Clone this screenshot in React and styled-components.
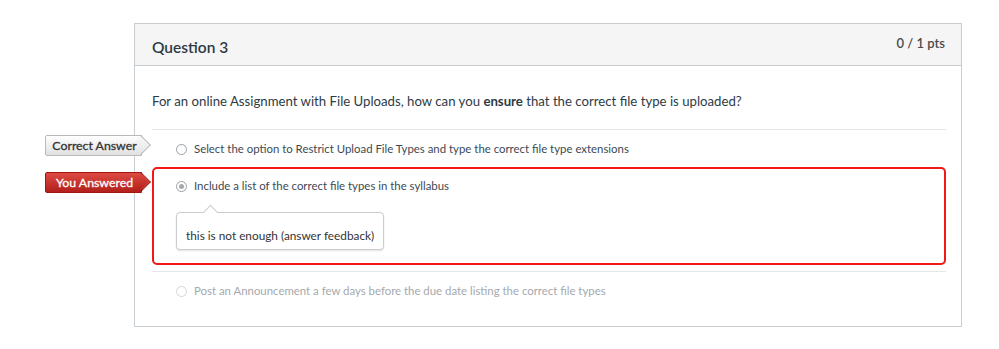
import React from 'react'
import styled, { createGlobalStyle, css } from 'styled-components'

const GlobalStyle = createGlobalStyle`
  body {
    margin: 0;
    background: #fff;
    font-family: Lato, "Open Sans", sans-serif;
    color: #2d3b45;
  }
`

const Page = styled.div`
  padding: 23px 0 0 134px;
`

const Card = styled.div`
  width: 826px;
  border: 1px solid #c7cdd1;
  background: #fff;
`

const Header = styled.div`
  display: flex;
  justify-content: space-between;
  align-items: flex-start;
  height: 41px;
  padding: 0 16px 0 17px;
  background: #f5f5f5;
  border-bottom: 1px solid #c7cdd1;
`

const Title = styled.h2`
  margin: 13px 0 0;
  font-size: 15.5px;
  line-height: 20px;
  font-weight: 600;
  color: #2d3b45;
`

const Points = styled.div`
  margin-top: 10px;
  font-size: 13px;
  line-height: 18px;
  font-weight: 600;
  color: #4a4a4a;
`

const Body = styled.div`
  padding: 0 15px 17px 17px;
`

const QuestionText = styled.p`
  margin: 0;
  padding: 25px 0 18px;
  font-size: 13.2px;
  line-height: 20px;
  color: #2d3b45;
`

const AnswerItem = styled.div`
  position: relative;
  ${p => p.$divider && css`
    border-top: 1px solid #e4e6e8;
  `}
  ${p => p.$gap && css`
    margin-top: 6px;
  `}
`

const AnswerBody = styled.div`
  padding: 10px 0 9px 24px;
  ${p => p.$wrong && css`
    padding: 8px 0 13px 22px;
    border: 2px solid #f01818;
    border-radius: 5px;
  `}
`

const AnswerLine = styled.div`
  display: flex;
  align-items: center;
  font-size: 11.4px;
  line-height: 18px;
  color: ${p => (p.$muted ? '#a5a9ad' : '#3d4a53')};
`

const Radio = styled.span`
  box-sizing: border-box;
  width: 11px;
  height: 11px;
  margin-right: 7px;
  border-radius: 50%;
  border: 1px solid ${p => (p.$muted ? '#d3d6d9' : '#9aa0a5')};
  background: #fff;
  display: flex;
  align-items: center;
  justify-content: center;
  flex-shrink: 0;
  &::after {
    content: '';
    display: ${p => (p.$checked ? 'block' : 'none')};
    width: 5px;
    height: 5px;
    border-radius: 50%;
    background: #a4a9ad;
  }
`

const Label = styled.div`
  position: absolute;
  z-index: 1;
  top: 5px;
  right: calc(100% + 10px);
  box-sizing: border-box;
  width: 97px;
  height: 21px;
  padding-left: 2px;
  border-radius: 2px 0 0 2px;
  font-size: 12.3px;
  line-height: 19px;
  font-weight: 400;
  -webkit-text-stroke: 0.3px currentColor;
  text-align: center;
  white-space: nowrap;
  ${p => (p.$tone === 'red'
    ? css`
      color: #fff;
      background: linear-gradient(#dc4a42, #b31f1a);
      border: 1px solid #a3150f;
      &::after {
        background: linear-gradient(135deg, #dc4a42, #b31f1a);
        border-color: #a3150f;
      }
    `
    : css`
      color: #333;
      background: linear-gradient(#ffffff, #e1e1e1);
      border: 1px solid #b9b9b9;
      &::after {
        background: linear-gradient(135deg, #fafafa, #e4e4e4);
        border-color: #b9b9b9;
      }
    `)}
  &::after {
    content: '';
    position: absolute;
    z-index: -1;
    top: 2px;
    right: -7px;
    width: 13px;
    height: 13px;
    border-style: solid;
    border-width: 1px 1px 0 0;
    transform: rotate(45deg);
  }
`

const Feedback = styled.div`
  position: relative;
  display: inline-block;
  margin-top: 17px;
  padding: 14px 9px 4px;
  border: 1px solid #c9cdd1;
  border-radius: 4px;
  box-shadow: 0 1px 2px rgba(0, 0, 0, 0.12);
  background: #fff;
  font-size: 11.8px;
  line-height: 18px;
  color: #333;
  &::before {
    content: '';
    position: absolute;
    top: -6px;
    left: 28px;
    width: 10px;
    height: 10px;
    background: #fff;
    border-top: 1px solid #c9cdd1;
    border-left: 1px solid #c9cdd1;
    transform: rotate(45deg);
  }
`

const App = () => (
  <Page>
    <GlobalStyle />
    <Card>
      <Header>
        <Title>Question 3</Title>
        <Points>0 / 1 pts</Points>
      </Header>
      <Body>
        <QuestionText>
          For an online Assignment with File Uploads, how can you <b>ensure</b> that the correct file type is uploaded?
        </QuestionText>
        <AnswerItem $divider>
          <Label>Correct Answer</Label>
          <AnswerBody>
            <AnswerLine>
              <Radio />
              Select the option to Restrict Upload File Types and type the correct file type extensions
            </AnswerLine>
          </AnswerBody>
        </AnswerItem>
        <AnswerItem>
          <Label $tone="red">You Answered</Label>
          <AnswerBody $wrong>
            <AnswerLine>
              <Radio $checked />
              Include a list of the correct file types in the syllabus
            </AnswerLine>
            <Feedback>this is not enough (answer feedback)</Feedback>
          </AnswerBody>
        </AnswerItem>
        <AnswerItem $divider $gap>
          <AnswerBody>
            <AnswerLine $muted>
              <Radio $muted />
              Post an Announcement a few days before the due date listing the correct file types
            </AnswerLine>
          </AnswerBody>
        </AnswerItem>
      </Body>
    </Card>
  </Page>
)

export default App
